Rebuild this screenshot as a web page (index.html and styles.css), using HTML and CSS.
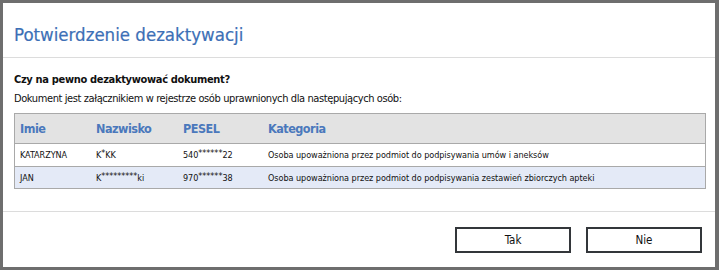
FILE: index.html
```html
<!DOCTYPE html>
<html lang="pl">
<head>
    <meta charset="UTF-8">
    <title>Potwierdzenie dezaktywacji</title>
    <link rel="stylesheet" href="styles.css">
</head>
<body>
    <div class="modal">
        <div class="modal-header">
            <h2>Potwierdzenie dezaktywacji</h2>
        </div>
        <div class="modal-body">
            <p class="question">Czy na pewno dezaktywować dokument?</p>
            <p class="info">Dokument jest załącznikiem w rejestrze osób uprawnionych dla następujących osób:</p>
            <table class="people">
                <thead>
                    <tr>
                        <th class="col-name">Imie</th>
                        <th class="col-surname">Nazwisko</th>
                        <th class="col-pesel">PESEL</th>
                        <th>Kategoria</th>
                    </tr>
                </thead>
                <tbody>
                    <tr>
                        <td>KATARZYNA</td>
                        <td>K<sup>*</sup>KK</td>
                        <td>540<sup>******</sup>22</td>
                        <td>Osoba upoważniona przez podmiot do podpisywania umów i aneksów</td>
                    </tr>
                    <tr class="alt">
                        <td>JAN</td>
                        <td>K<sup>*********</sup>ki</td>
                        <td>970<sup>******</sup>38</td>
                        <td>Osoba upoważniona przez podmiot do podpisywania zestawień zbiorczych apteki</td>
                    </tr>
                </tbody>
            </table>
        </div>
        <div class="modal-footer">
            <button type="button" class="btn">Tak</button>
            <button type="button" class="btn">Nie</button>
        </div>
    </div>
</body>
</html>
```

FILE: styles.css
```css
body {
    margin: 0;
    background-color: #6e6e6e;
    font-family: "DejaVu Sans Condensed", "DejaVu Sans", sans-serif;
    color: #222;
}

.modal {
    margin: 3px 4px 3px 3px;
    height: 264px;
    background-color: #fff;
    display: flex;
    flex-direction: column;
}

.modal-header {
    height: 54px;
    border-bottom: 1px solid #dcdcdc;
    padding: 0 11px;
    display: flex;
    align-items: center;
}

.modal-header h2 {
    margin: 9px 0 0 0;
    font-size: 18.5px;
    line-height: 22px;
    font-weight: normal;
    color: #3c6fb6;
    -webkit-text-stroke: 0.2px #3c6fb6;
}

.modal-body {
    height: 153px;
    padding: 0 11px;
    border-bottom: 1px solid #dcdcdc;
}

.question {
    margin: 14px 0 0 0;
    font-size: 11px;
    line-height: 16px;
    font-weight: bold;
    letter-spacing: -0.33px;
    color: #111;
}

.info {
    margin: 3px 0 0 0;
    font-size: 11px;
    line-height: 16px;
    letter-spacing: -0.4px;
    color: #111;
}

.people {
    margin-top: 6px;
    width: 692px;
    border-collapse: collapse;
    border: 1px solid #a9a9a9;
}

.people th {
    height: 29px;
    background-color: #e3e3e3;
    border-bottom: 1px solid #a9a9a9;
    text-align: left;
    padding: 0 0 0 5px;
    font-size: 12.5px;
    letter-spacing: -0.5px;
    font-weight: bold;
    color: #4a78bc;
}

.people td {
    height: 22px;
    padding: 0 0 0 5px;
    font-size: 9px;
    letter-spacing: -0.04px;
    color: #111;
}

.people sup {
    font-size: 9px;
    line-height: 0;
    vertical-align: 2px;
}

.people tr.alt td {
    height: 21px;
    background-color: #e4eaf7;
    border-top: 1px solid #a9a9a9;
}

.col-name {
    width: 71px;
}

.col-surname {
    width: 82px;
}

.col-pesel {
    width: 80px;
}

.modal-footer {
    flex: 1;
    display: flex;
    justify-content: flex-end;
    align-items: flex-start;
    gap: 15px;
    padding: 15px 13px 0 0;
}

.btn {
    width: 116px;
    height: 26px;
    background-color: #fff;
    border: 2px solid #33363a;
    font-family: "DejaVu Sans Condensed", "DejaVu Sans", sans-serif;
    font-size: 11.5px;
    color: #111;
    cursor: pointer;
}
```
